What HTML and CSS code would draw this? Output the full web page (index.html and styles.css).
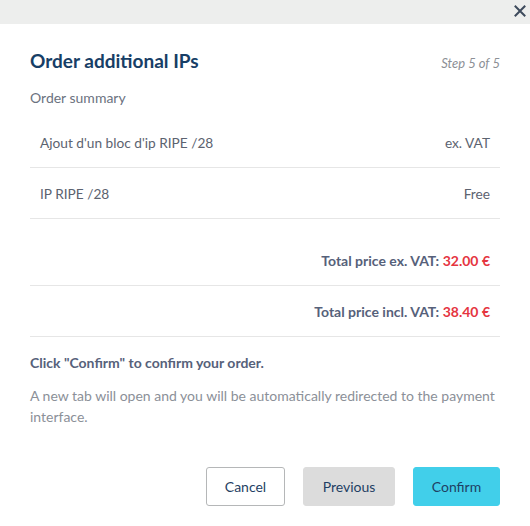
FILE: index.html
```html
<!DOCTYPE html>
<html>
<head>
<meta charset="utf-8">
<link rel="stylesheet" href="styles.css">
</head>
<body>
<div class="modal">
  <div class="topbar">
    <button class="close" aria-label="Close">
      <svg width="12" height="12" viewBox="0 0 12 12"><path d="M1.5 1.5 L10.5 10.5 M10.5 1.5 L1.5 10.5" stroke="#3d4a5c" stroke-width="2" stroke-linecap="square"/></svg>
    </button>
  </div>
  <div class="content">
    <div class="header">
      <h1 class="title">Order additional IPs</h1>
      <span class="step">Step 5 of 5</span>
    </div>
    <div class="subtitle">Order summary</div>
    <div class="table">
      <div class="row"><span>Ajout d'un bloc d'ip RIPE /28</span><span>ex. VAT</span></div>
      <div class="row"><span>IP RIPE /28</span><span>Free</span></div>
    </div>
    <div class="totals">
      <div class="row total"><span></span><span><b>Total price ex. VAT:</b> <b class="price">32.00 €</b></span></div>
      <div class="row total"><span></span><span><b>Total price incl. VAT:</b> <b class="price">38.40 €</b></span></div>
    </div>
    <p class="confirm-note">Click "Confirm" to confirm your order.</p>
    <p class="info">A new tab will open and you will be automatically redirected to the payment interface.</p>
    <div class="actions">
      <button class="btn btn-cancel">Cancel</button>
      <button class="btn btn-prev">Previous</button>
      <button class="btn btn-confirm">Confirm</button>
    </div>
  </div>
</div>
</body>
</html>
```
FILE: styles.css
```css
* { box-sizing: border-box; }
html, body { margin: 0; padding: 0; background: #fff; }
body { font-family: Lato, "Open Sans", sans-serif; font-size: 14px; color: #5c6370; }
.modal { width: 530px; }
.topbar { height: 24px; background: #edeeed; display: flex; justify-content: flex-end; align-items: center; padding-right: 2px; }
.close { background: none; border: 0; padding: 0; height: 16px; width: 16px; display: flex; align-items: center; justify-content: center; cursor: pointer; margin-top: -2px; }
.content { padding: 26px 30px 0 30px; }
.header { display: flex; justify-content: space-between; align-items: baseline; }
.title { margin: 0; font-size: 19px; font-weight: 700; color: #173e66; line-height: 22px; }
.step { font-style: italic; color: #8c9096; font-size: 13px; }
.subtitle { margin-top: 16px; line-height: 20px; color: #6b7280; }
.table { margin-top: 9px; }
.totals { margin-top: 16px; }
.row { display: flex; justify-content: space-between; align-items: center; height: 51px; padding: 0 10px 0 10px; border-bottom: 1px solid #e6e6e6; color: #5c6370; font-size: 13.7px; }
.row b { color: #56617a; font-weight: 700; font-size: 14px; }
.row b.price { color: #e5353f; }
.confirm-note { margin: 16px 0 0 0; font-weight: 700; color: #56617a; line-height: 20px; }
.info { margin: 12px 0 0 0; color: #8b9098; line-height: 21px; }
.actions { display: flex; justify-content: flex-end; gap: 18px; margin-top: 40px; }
.btn { font-family: inherit; font-size: 14px; height: 39px; border-radius: 3px; border: 1px solid transparent; color: #1f3f64; padding: 0; cursor: pointer; }
.btn-cancel { width: 79px; background: #fff; border-color: #b5b7b8; }
.btn-prev { width: 92px; background: #dcdcdc; border-color: #dcdcdc; }
.btn-confirm { width: 87px; background: #41cfea; border-color: #41cfea; }
```
